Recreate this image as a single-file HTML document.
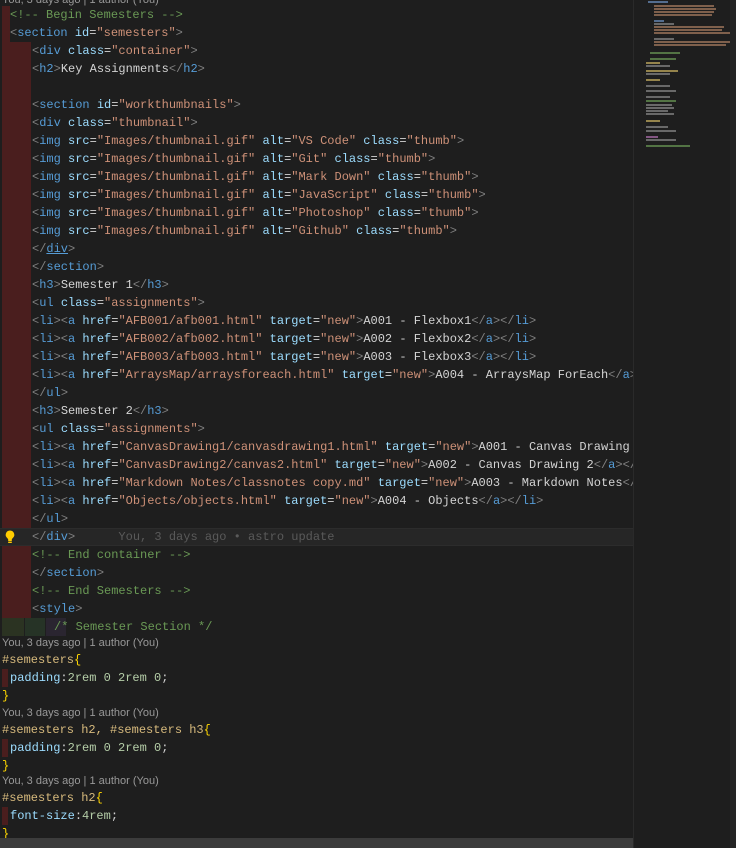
<!DOCTYPE html>
<html><head><meta charset="utf-8"><style>
body{margin:0;width:736px;height:848px;background:#1e1e1e;overflow:hidden;position:relative;font-family:"Liberation Mono",monospace;font-size:12px;color:#d4d4d4}
.l{position:absolute;height:18px;line-height:18px;white-space:pre}
.lens{position:absolute;left:2px;font-family:"Liberation Sans",sans-serif;font-size:11px;color:#999;white-space:pre;line-height:16px;height:16px}
.b{color:#808080}.t{color:#569cd6}.a{color:#9cdcfe}.s{color:#ce9178}.c{color:#6a9955}
.sel{color:#d7ba7d}.br{color:#ffd700}.n{color:#b5cea8}
#ed{position:absolute;left:0;top:0;width:633px;height:848px;overflow:hidden}
.gut{position:absolute;background:#4a1e1e}
</style></head><body>
<div id="ed">
<div class="lens" style="top:-8px">You, 3 days ago | 1 author (You)</div>
<div class="gut" style="left:2px;top:6px;width:8px;height:36px"></div>
<div class="gut" style="left:2px;top:42px;width:29px;height:576px"></div>
<div style="position:absolute;left:0;top:528px;width:633px;height:18px;background:#262626;border-top:1px solid #2c2c2c;border-bottom:1px solid #2c2c2c;box-sizing:border-box"></div>
<div style="position:absolute;left:2px;top:618px;width:22px;height:18px;background:#2b3322"></div>
<div style="position:absolute;left:25px;top:618px;width:20px;height:18px;background:#263326"></div>
<div style="position:absolute;left:46px;top:618px;width:20px;height:18px;background:#2a2530"></div>
<svg style="position:absolute;left:4px;top:529px" width="12" height="16" viewBox="0 0 12 16"><path d="M6 1.5a4.3 4.3 0 0 0-2.6 7.7c.5.4.8 1 .8 1.6V12h3.6v-1.2c0-.6.3-1.2.8-1.6A4.3 4.3 0 0 0 6 1.5z" fill="#ffcc00"/><rect x="4.2" y="12.6" width="3.6" height="1.4" fill="#ffcc00"/></svg>

<div class="l c" style="left:10px;top:6px">&lt;!-- Begin Semesters --&gt;</div>
<div class="l" style="left:10px;top:24px"><span class="b">&lt;</span><span class="t">section</span> <span class="a">id</span>=<span class="s">"semesters"</span><span class="b">&gt;</span></div>
<div class="l" style="left:32px;top:42px"><span class="b">&lt;</span><span class="t">div</span> <span class="a">class</span>=<span class="s">"container"</span><span class="b">&gt;</span></div>
<div class="l" style="left:32px;top:60px"><span class="b">&lt;</span><span class="t">h2</span><span class="b">&gt;</span>Key Assignments<span class="b">&lt;/</span><span class="t">h2</span><span class="b">&gt;</span></div>
<div class="l" style="left:32px;top:96px"><span class="b">&lt;</span><span class="t">section</span> <span class="a">id</span>=<span class="s">"workthumbnails"</span><span class="b">&gt;</span></div>
<div class="l" style="left:32px;top:114px"><span class="b">&lt;</span><span class="t">div</span> <span class="a">class</span>=<span class="s">"thumbnail"</span><span class="b">&gt;</span></div>
<div class="l" style="left:32px;top:132px"><span class="b">&lt;</span><span class="t">img</span> <span class="a">src</span>=<span class="s">"Images/thumbnail.gif"</span> <span class="a">alt</span>=<span class="s">"VS Code"</span> <span class="a">class</span>=<span class="s">"thumb"</span><span class="b">&gt;</span></div>
<div class="l" style="left:32px;top:150px"><span class="b">&lt;</span><span class="t">img</span> <span class="a">src</span>=<span class="s">"Images/thumbnail.gif"</span> <span class="a">alt</span>=<span class="s">"Git"</span> <span class="a">class</span>=<span class="s">"thumb"</span><span class="b">&gt;</span></div>
<div class="l" style="left:32px;top:168px"><span class="b">&lt;</span><span class="t">img</span> <span class="a">src</span>=<span class="s">"Images/thumbnail.gif"</span> <span class="a">alt</span>=<span class="s">"Mark Down"</span> <span class="a">class</span>=<span class="s">"thumb"</span><span class="b">&gt;</span></div>
<div class="l" style="left:32px;top:186px"><span class="b">&lt;</span><span class="t">img</span> <span class="a">src</span>=<span class="s">"Images/thumbnail.gif"</span> <span class="a">alt</span>=<span class="s">"JavaScript"</span> <span class="a">class</span>=<span class="s">"thumb"</span><span class="b">&gt;</span></div>
<div class="l" style="left:32px;top:204px"><span class="b">&lt;</span><span class="t">img</span> <span class="a">src</span>=<span class="s">"Images/thumbnail.gif"</span> <span class="a">alt</span>=<span class="s">"Photoshop"</span> <span class="a">class</span>=<span class="s">"thumb"</span><span class="b">&gt;</span></div>
<div class="l" style="left:32px;top:222px"><span class="b">&lt;</span><span class="t">img</span> <span class="a">src</span>=<span class="s">"Images/thumbnail.gif"</span> <span class="a">alt</span>=<span class="s">"Github"</span> <span class="a">class</span>=<span class="s">"thumb"</span><span class="b">&gt;</span></div>
<div class="l" style="left:32px;top:240px"><span class="b">&lt;/</span><span class="t" style="text-decoration:underline">div</span><span class="b">&gt;</span></div>
<div class="l" style="left:32px;top:258px"><span class="b">&lt;/</span><span class="t">section</span><span class="b">&gt;</span></div>
<div class="l" style="left:32px;top:276px"><span class="b">&lt;</span><span class="t">h3</span><span class="b">&gt;</span>Semester 1<span class="b">&lt;/</span><span class="t">h3</span><span class="b">&gt;</span></div>
<div class="l" style="left:32px;top:294px"><span class="b">&lt;</span><span class="t">ul</span> <span class="a">class</span>=<span class="s">"assignments"</span><span class="b">&gt;</span></div>
<div class="l" style="left:32px;top:312px"><span class="b">&lt;</span><span class="t">li</span><span class="b">&gt;&lt;</span><span class="t">a</span> <span class="a">href</span>=<span class="s">"AFB001/afb001.html"</span> <span class="a">target</span>=<span class="s">"new"</span><span class="b">&gt;</span>A001 - Flexbox1<span class="b">&lt;/</span><span class="t">a</span><span class="b">&gt;&lt;/</span><span class="t">li</span><span class="b">&gt;</span></div>
<div class="l" style="left:32px;top:330px"><span class="b">&lt;</span><span class="t">li</span><span class="b">&gt;&lt;</span><span class="t">a</span> <span class="a">href</span>=<span class="s">"AFB002/afb002.html"</span> <span class="a">target</span>=<span class="s">"new"</span><span class="b">&gt;</span>A002 - Flexbox2<span class="b">&lt;/</span><span class="t">a</span><span class="b">&gt;&lt;/</span><span class="t">li</span><span class="b">&gt;</span></div>
<div class="l" style="left:32px;top:348px"><span class="b">&lt;</span><span class="t">li</span><span class="b">&gt;&lt;</span><span class="t">a</span> <span class="a">href</span>=<span class="s">"AFB003/afb003.html"</span> <span class="a">target</span>=<span class="s">"new"</span><span class="b">&gt;</span>A003 - Flexbox3<span class="b">&lt;/</span><span class="t">a</span><span class="b">&gt;&lt;/</span><span class="t">li</span><span class="b">&gt;</span></div>
<div class="l" style="left:32px;top:366px"><span class="b">&lt;</span><span class="t">li</span><span class="b">&gt;&lt;</span><span class="t">a</span> <span class="a">href</span>=<span class="s">"ArraysMap/arraysforeach.html"</span> <span class="a">target</span>=<span class="s">"new"</span><span class="b">&gt;</span>A004 - ArraysMap ForEach<span class="b">&lt;/</span><span class="t">a</span><span class="b">&gt;&lt;/</span><span class="t">li</span><span class="b">&gt;</span></div>
<div class="l" style="left:32px;top:384px"><span class="b">&lt;/</span><span class="t">ul</span><span class="b">&gt;</span></div>
<div class="l" style="left:32px;top:402px"><span class="b">&lt;</span><span class="t">h3</span><span class="b">&gt;</span>Semester 2<span class="b">&lt;/</span><span class="t">h3</span><span class="b">&gt;</span></div>
<div class="l" style="left:32px;top:420px"><span class="b">&lt;</span><span class="t">ul</span> <span class="a">class</span>=<span class="s">"assignments"</span><span class="b">&gt;</span></div>
<div class="l" style="left:32px;top:438px"><span class="b">&lt;</span><span class="t">li</span><span class="b">&gt;&lt;</span><span class="t">a</span> <span class="a">href</span>=<span class="s">"CanvasDrawing1/canvasdrawing1.html"</span> <span class="a">target</span>=<span class="s">"new"</span><span class="b">&gt;</span>A001 - Canvas Drawing 1<span class="b">&lt;/</span><span class="t">a</span><span class="b">&gt;</span></div>
<div class="l" style="left:32px;top:456px"><span class="b">&lt;</span><span class="t">li</span><span class="b">&gt;&lt;</span><span class="t">a</span> <span class="a">href</span>=<span class="s">"CanvasDrawing2/canvas2.html"</span> <span class="a">target</span>=<span class="s">"new"</span><span class="b">&gt;</span>A002 - Canvas Drawing 2<span class="b">&lt;/</span><span class="t">a</span><span class="b">&gt;&lt;/</span></div>
<div class="l" style="left:32px;top:474px"><span class="b">&lt;</span><span class="t">li</span><span class="b">&gt;&lt;</span><span class="t">a</span> <span class="a">href</span>=<span class="s">"Markdown Notes/classnotes copy.md"</span> <span class="a">target</span>=<span class="s">"new"</span><span class="b">&gt;</span>A003 - Markdown Notes<span class="b">&lt;/</span></div>
<div class="l" style="left:32px;top:492px"><span class="b">&lt;</span><span class="t">li</span><span class="b">&gt;&lt;</span><span class="t">a</span> <span class="a">href</span>=<span class="s">"Objects/objects.html"</span> <span class="a">target</span>=<span class="s">"new"</span><span class="b">&gt;</span>A004 - Objects<span class="b">&lt;/</span><span class="t">a</span><span class="b">&gt;&lt;/</span><span class="t">li</span><span class="b">&gt;</span></div>
<div class="l" style="left:32px;top:510px"><span class="b">&lt;/</span><span class="t">ul</span><span class="b">&gt;</span></div>
<div class="l" style="left:32px;top:528px"><span class="b">&lt;/</span><span class="t">div</span><span class="b">&gt;</span><span style="color:#5a5a5a">      You, 3 days ago • astro update</span></div>
<div class="l c" style="left:32px;top:546px">&lt;!-- End container --&gt;</div>
<div class="l" style="left:32px;top:564px"><span class="b">&lt;/</span><span class="t">section</span><span class="b">&gt;</span></div>
<div class="l c" style="left:32px;top:582px">&lt;!-- End Semesters --&gt;</div>
<div class="l" style="left:32px;top:600px"><span class="b">&lt;</span><span class="t">style</span><span class="b">&gt;</span></div>
<div class="l c" style="left:54px;top:618px">/* Semester Section */</div>

<div class="lens" style="top:635px">You, 3 days ago | 1 author (You)</div>
<div class="l" style="left:2px;top:651px"><span class="sel">#semesters</span><span class="br">{</span></div>
<div class="gut" style="left:2px;top:669px;width:6px;height:18px"></div>
<div class="l" style="left:10px;top:669px"><span class="a">padding</span>:<span class="n">2rem 0 2rem 0</span>;</div>
<div class="l br" style="left:2px;top:687px">}</div>
<div class="lens" style="top:705px">You, 3 days ago | 1 author (You)</div>
<div class="l" style="left:2px;top:721px"><span class="sel">#semesters h2, #semesters h3</span><span class="br">{</span></div>
<div class="gut" style="left:2px;top:739px;width:6px;height:18px"></div>
<div class="l" style="left:10px;top:739px"><span class="a">padding</span>:<span class="n">2rem 0 2rem 0</span>;</div>
<div class="l br" style="left:2px;top:757px">}</div>
<div class="lens" style="top:773px">You, 3 days ago | 1 author (You)</div>
<div class="l" style="left:2px;top:789px"><span class="sel">#semesters h2</span><span class="br">{</span></div>
<div class="gut" style="left:2px;top:807px;width:6px;height:18px"></div>
<div class="l" style="left:10px;top:807px"><span class="a">font-size</span>:<span class="n">4rem</span>;</div>
<div class="l br" style="left:2px;top:825px">}</div>
<div style="position:absolute;left:0;top:838px;width:633px;height:10px;background:#3c3c3c"></div>
</div>

<div style="position:absolute;left:633px;top:0;width:103px;height:848px;background:#1e1e1e;border-left:1px solid #2a2a2a"></div>
<div style="position:absolute;left:730px;top:0;width:6px;height:848px;background:#252525"></div>
<svg style="position:absolute;left:640px;top:0" width="90" height="160">
<g opacity="0.7">
<rect x="8" y="1" width="20" height="2" fill="#6b8fc0"/>
<rect x="14" y="5" width="60" height="2" fill="#a87c60"/><rect x="14" y="8" width="62" height="2" fill="#a87c60"/><rect x="14" y="11" width="60" height="2" fill="#a87c60"/><rect x="14" y="14" width="58" height="2" fill="#a87c60"/>
<rect x="14" y="20" width="10" height="2" fill="#6b8fc0"/><rect x="14" y="23" width="20" height="2" fill="#8a8a8a"/>
<rect x="14" y="26" width="70" height="2" fill="#a87c60"/><rect x="14" y="29" width="68" height="2" fill="#a87c60"/><rect x="14" y="32" width="76" height="2" fill="#a87c60"/>
<rect x="14" y="38" width="20" height="2" fill="#8a8a8a"/>
<rect x="14" y="41" width="76" height="2" fill="#a87c60"/><rect x="14" y="44" width="72" height="2" fill="#a87c60"/>
<rect x="10" y="52" width="30" height="2" fill="#6a9955"/><rect x="10" y="58" width="26" height="2" fill="#6a9955"/>
<rect x="6" y="62" width="14" height="2" fill="#c8b060"/><rect x="6" y="65" width="24" height="2" fill="#8a8a8a"/>
<rect x="6" y="70" width="32" height="2" fill="#c8b060"/><rect x="6" y="73" width="24" height="2" fill="#8a8a8a"/>
<rect x="6" y="79" width="14" height="2" fill="#c8b060"/><rect x="6" y="85" width="24" height="2" fill="#8a8a8a"/>
<rect x="6" y="90" width="30" height="2" fill="#8a8a8a"/><rect x="6" y="96" width="24" height="2" fill="#8a8a8a"/>
<rect x="6" y="100" width="30" height="2" fill="#6a9955"/><rect x="6" y="104" width="26" height="2" fill="#8a8a8a"/><rect x="6" y="107" width="28" height="2" fill="#8a8a8a"/><rect x="6" y="110" width="22" height="2" fill="#8a8a8a"/><rect x="6" y="113" width="28" height="2" fill="#8a8a8a"/>
<rect x="6" y="120" width="14" height="2" fill="#c8b060"/><rect x="6" y="126" width="22" height="2" fill="#8a8a8a"/><rect x="6" y="130" width="30" height="2" fill="#8a8a8a"/>
<rect x="6" y="136" width="12" height="2" fill="#b070b0"/><rect x="6" y="139" width="30" height="2" fill="#8a8a8a"/><rect x="6" y="145" width="44" height="2" fill="#6a9955"/>
</g></svg>
</body></html>
